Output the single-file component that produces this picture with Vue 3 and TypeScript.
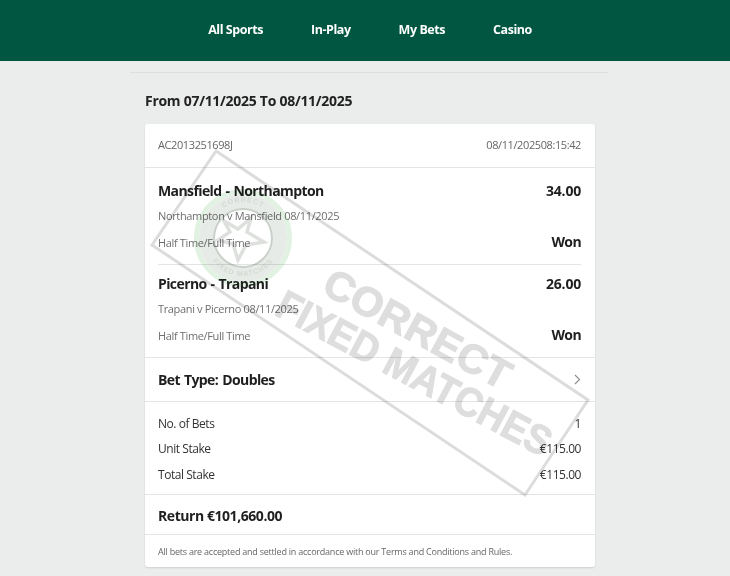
<script setup lang="ts">
const nav = ['All Sports', 'In-Play', 'My Bets', 'Casino']

const legs = [
  { title: 'Mansfield - Northampton', odds: '34.00', event: 'Northampton v Mansfield 08/11/2025', market: 'Half Time/Full Time', result: 'Won' },
  { title: 'Picerno - Trapani', odds: '26.00', event: 'Trapani v Picerno 08/11/2025', market: 'Half Time/Full Time', result: 'Won' },
]

const totals = [
  { label: 'No. of Bets', value: '1' },
  { label: 'Unit Stake', value: '€115.00' },
  { label: 'Total Stake', value: '€115.00' },
]
</script>

<template>
  <div class="page">
    <header class="topbar">
      <a v-for="item in nav" :key="item" class="nav-link">{{ item }}</a>
    </header>

    <main class="content">
      <div class="rule" />
      <h1 class="range">From 07/11/2025 To 08/11/2025</h1>

      <section class="card">
        <div class="card-head">
          <span>AC2013251698J</span>
          <span class="stamp"><span>08/11/2025</span><span>08:15:42</span></span>
        </div>

        <div class="legs">
          <div v-for="leg in legs" :key="leg.title" class="leg">
            <div class="line">
              <strong class="title">{{ leg.title }}</strong>
              <strong class="title number">{{ leg.odds }}</strong>
            </div>
            <div class="event">{{ leg.event }}</div>
            <div class="line market-line">
              <span class="event">{{ leg.market }}</span>
              <strong class="title">{{ leg.result }}</strong>
            </div>
          </div>
        </div>

        <div class="bet-type">
          <strong class="title">Bet Type: Doubles</strong>
          <svg class="chevron" width="7" height="11" viewBox="0 0 7 11" aria-hidden="true">
            <path d="M1 1l4.5 4.5L1 10" fill="none" stroke="#8a8a8a" stroke-width="1.1" />
          </svg>
        </div>

        <div class="totals">
          <div v-for="row in totals" :key="row.label" class="total-row">
            <span>{{ row.label }}</span>
            <span>{{ row.value }}</span>
          </div>
        </div>

        <div class="return"><strong class="title">Return €101,660.00</strong></div>

        <div class="terms">All bets are accepted and settled in accordance with our Terms and Conditions and Rules.</div>
      </section>
    </main>

    <!-- watermark lying over the card -->
    <svg class="watermark" width="730" height="576" viewBox="0 0 730 576" aria-hidden="true">
      <defs>
        <path id="seal-top" d="M207 238A36 36 0 0 1 279 238" />
        <path id="seal-bottom" d="M205 238A38 38 0 0 0 281 238" />
      </defs>
      <g fill="none">
        <circle cx="243" cy="238" r="46.5" stroke="#e2f2e2" stroke-width="5" />
        <circle cx="243" cy="238" r="37" stroke="#e7ebe7" stroke-width="14" />
        <circle cx="243" cy="238" r="29" stroke="#c9cfc9" stroke-width="2" />
        <path d="M224 221l14 8 13-11-4 14 17 10-18 3-8 15-5-16-15-4 12-8z" stroke="#dde0dd" stroke-width="3.5" />
      </g>
      <text class="wm-seal" text-anchor="middle"><textPath href="#seal-top" startOffset="50%">CORRECT</textPath></text>
      <text class="wm-seal" text-anchor="middle"><textPath href="#seal-bottom" startOffset="50%">FIXED MATCHES</textPath></text>
      <path class="wm-frame" d="M216 151L588 400 525 495 152 245z" />
      <text class="wm-text" transform="translate(320 292) rotate(28.5) scale(1.02 1)">CORRECT</text>
      <text class="wm-text" transform="translate(273 314) rotate(28) scale(0.92 1)">FIXED MATCHES</text>
    </svg>
  </div>
</template>

<style>
html,
body {
  margin: 0;
  background: #ebecec;
}
</style>

<style scoped>
.page {
  position: relative;
  width: 730px;
  height: 576px;
  overflow: hidden;
  font-family: "Open Sans", "Noto Sans", sans-serif;
  color: #1f1f1f;
}

.topbar {
  height: 61px;
  background: #005641;
  display: flex;
  justify-content: center;
  align-items: center;
  gap: 48px;
  padding: 0 0 2px 10px;
  box-sizing: border-box;
}

.nav-link {
  color: #fff;
  font-size: 12.5px;
  font-weight: 700;
  letter-spacing: -0.45px;
}

.content {
  width: 478px;
  margin-left: 130px;
}

.rule {
  height: 1px;
  margin-top: 11px;
  background: #dcdddd;
}

.range {
  margin: 18px 0 13px 15px;
  font-size: 14px;
  line-height: 20px;
  font-weight: 700;
  letter-spacing: -0.28px;
  color: #222;
}

.card {
  width: 450px;
  margin-left: 15px;
  background: #fff;
  border-radius: 3px;
  box-shadow: 0 1px 2px rgba(0, 0, 0, 0.12);
}

.card-head {
  height: 44px;
  box-sizing: border-box;
  padding: 0 14px 2px 13px;
  display: flex;
  justify-content: space-between;
  align-items: center;
  font-size: 11px;
  letter-spacing: -0.4px;
  color: #666;
  border-bottom: 1px solid #e3e4e4;
}

.stamp {
  display: flex;
}

.legs {
  padding: 0 14px 0 13px;
}

.leg {
  height: 97px;
  padding-top: 12px;
  box-sizing: border-box;
  border-bottom: 1px solid #e3e4e4;
}

.leg:last-child {
  height: 92px;
  padding-top: 8px;
  border-bottom: 0;
}

.line {
  display: flex;
  justify-content: space-between;
  align-items: center;
  height: 20px;
}

.title {
  font-size: 14px;
  font-weight: 700;
  letter-spacing: -0.6px;
  word-spacing: 1px;
  color: #1f1f1f;
}

.number {
  letter-spacing: -0.2px;
}

.event {
  margin-top: 6px;
  font-size: 11px;
  line-height: 20px;
  letter-spacing: -0.35px;
  color: #6f6f6f;
}

.market-line {
  margin-top: 6px;
}

.market-line .event {
  margin-top: 2px;
}

.market-line .title {
  margin-bottom: 2px;
}

.bet-type {
  height: 45px;
  box-sizing: border-box;
  padding: 0 14px 0 13px;
  display: flex;
  justify-content: space-between;
  align-items: center;
  border-top: 1px solid #e3e4e4;
  border-bottom: 1px solid #e3e4e4;
}

.totals {
  height: 93px;
  box-sizing: border-box;
  padding: 8.5px 14px 0 13px;
  border-bottom: 1px solid #e3e4e4;
}

.total-row {
  height: 25.5px;
  display: flex;
  justify-content: space-between;
  align-items: center;
  font-size: 12px;
  letter-spacing: -0.45px;
  color: #333;
}

.return {
  height: 40px;
  box-sizing: border-box;
  padding: 2px 13px 0;
  display: flex;
  align-items: center;
  border-bottom: 1px solid #e3e4e4;
}

.return .title {
  letter-spacing: -0.44px;
  word-spacing: 0;
}

.terms {
  height: 32px;
  padding: 0 13px;
  display: flex;
  align-items: center;
  font-size: 9px;
  letter-spacing: -0.23px;
  color: #666;
}

.watermark {
  position: absolute;
  left: 0;
  top: 0;
  pointer-events: none;
  mix-blend-mode: multiply;
  filter: blur(0.4px);
}

.wm-frame {
  fill: none;
  stroke: #dcdcdc;
  stroke-width: 3;
}

.wm-text {
  font-family: "Liberation Sans", Arial, sans-serif;
  font-size: 41px;
  font-weight: 700;
  fill: #dedede;
  stroke: #dedede;
  stroke-width: 1px;
}

.wm-seal {
  font-family: "Liberation Sans", Arial, sans-serif;
  font-size: 7px;
  font-weight: 700;
  letter-spacing: 1px;
  fill: #d3d9d3;
}
</style>
